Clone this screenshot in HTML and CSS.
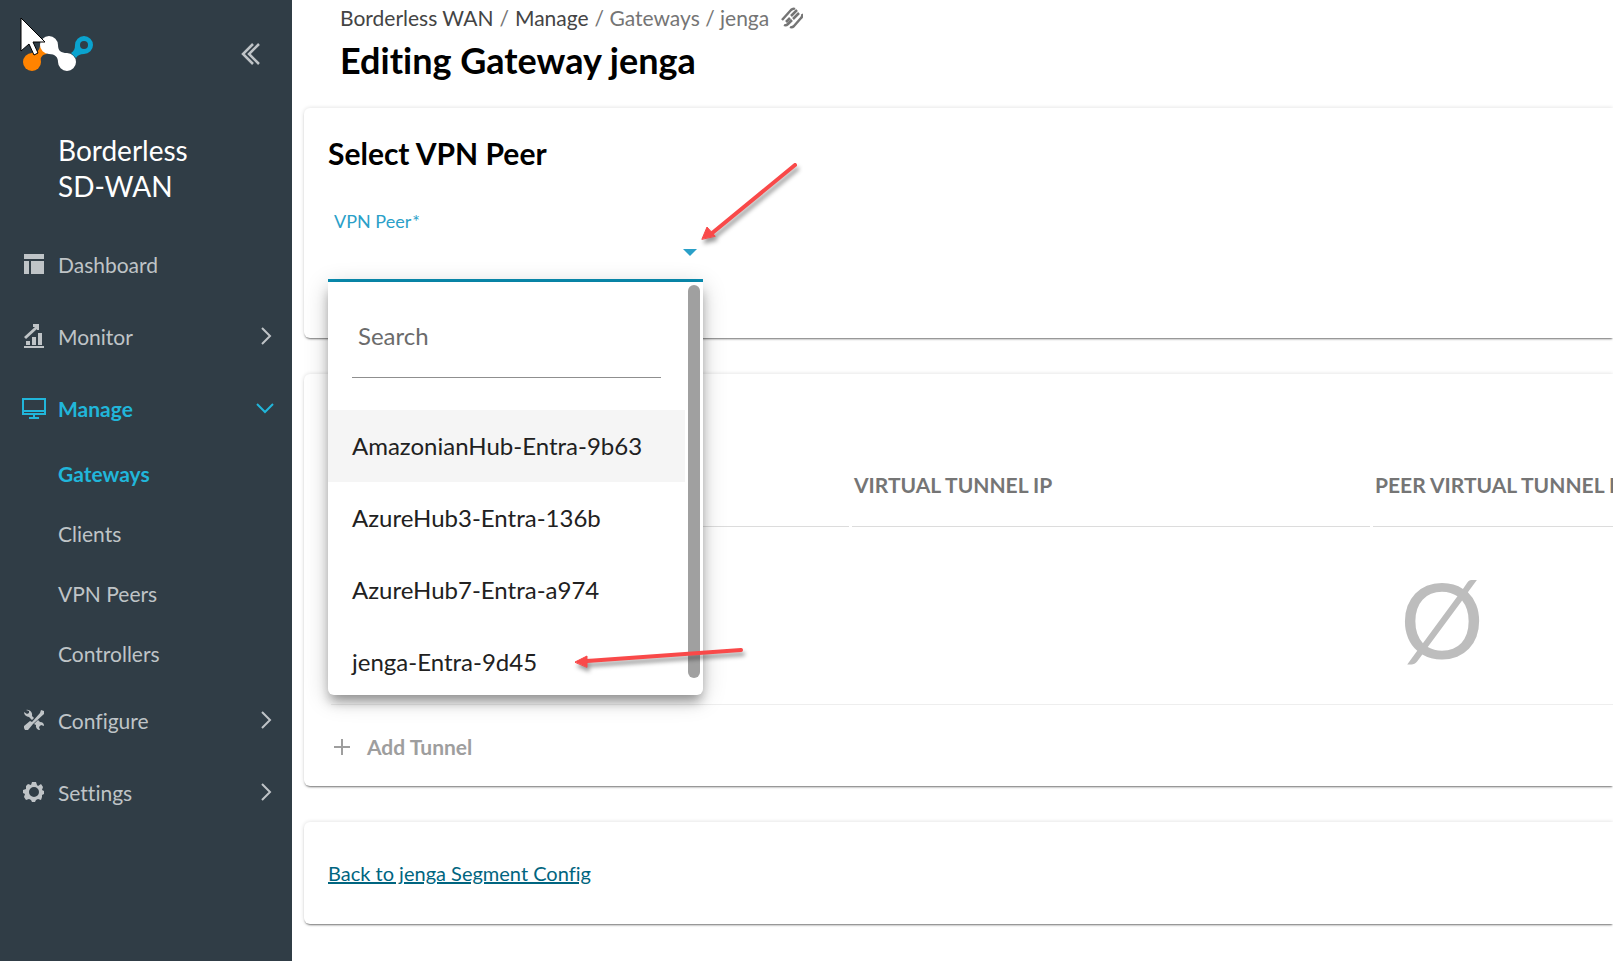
FILE: index.html
```html
<!DOCTYPE html>
<html lang="en">
<head>
  <meta charset="UTF-8" />
  <meta name="viewport" content="width=device-width, initial-scale=1" />
  <title>Editing Gateway jenga</title>
  <link rel="stylesheet" href="styles.css">
</head>
<body>
  <aside class="sidebar">
    <div class="sidebar-top">
      <svg class="logo" width="74" height="38" viewBox="0 0 74 38">
        <path d="M9 18c6 0 9-3 9-8l7 9c-5 0-7 4-7 9z" fill="#ff8300"/>
        <circle cx="10" cy="27" r="9" fill="#ff8300"/>
        <path d="M27 1a9 9 0 0 1 9 9c0 6 3 8 9 8a9 9 0 1 1-9 9c0-5-3-8-9-8a9 9 0 0 1 0-18z" fill="#fff"/>
        <path d="M62 1a9 9 0 1 1 0 18c-4 0-6 1-8 4l-5-5c3-2 4-4 4-8a9 9 0 0 1 9-9z" fill="#0aa3cf"/>
        <circle cx="62" cy="10" r="4" fill="#303d46"/>
      </svg>
      <button class="collapse-btn" aria-label="Collapse menu">
        <svg width="20" height="22" viewBox="0 0 20 22" fill="none" stroke="currentColor" stroke-width="2.500"><path d="M13 1 3 11l10 10M19 1 9 11l10 10"/></svg>
      </button>
    </div>
    <div class="product">Borderless<br>SD-WAN</div>
    <nav>
      <a class="nav-item" href="#">
        <svg class="nav-icon" viewBox="0 0 24 24" fill="currentColor"><path d="M2 2h20v5H2zM2 9h5v13H2zM9 9h13v13H9z"/></svg>
        Dashboard
      </a>
      <a class="nav-item" href="#">
        <svg class="nav-icon" viewBox="0 0 24 24" fill="currentColor"><path d="M2 22h20v2H2zM4 17h4v4H4zM10 13h4v8h-4zM16 9h4v12h-4zM2 13 13 3h-2V0h6v6h-2V5L4 15z"/></svg>
        Monitor
        <svg class="chevron" viewBox="0 0 18 18"><path d="m6 1 8 8-8 8"/></svg>
      </a>
      <a class="nav-item active" href="#">
        <svg class="nav-icon" viewBox="0 0 24 24" fill="none" stroke="currentColor" stroke-width="2"><path d="M1 3h22v15H1zM1 15h22M12 18v4M7 22h10"/></svg>
        Manage
        <svg class="chevron" viewBox="0 0 18 18"><path d="m1 5 8 8 8-8"/></svg>
      </a>
      <div class="subnav">
        <a class="sub-item active" href="#">Gateways</a>
        <a class="sub-item" href="#">Clients</a>
        <a class="sub-item" href="#">VPN Peers</a>
        <a class="sub-item" href="#">Controllers</a>
      </div>
      <a class="nav-item" href="#">
        <svg class="nav-icon" viewBox="0 0 24 24" fill="currentColor">
          <path d="M4 2a5 5 0 0 1 6 6l2 2-2 2-3-3a5 5 0 0 1-5-5l3 2 2-1V3z"/>
          <path d="m14 14 2-2 2 2a4 4 0 0 1 4 4l-3-1-2 2 1 3a4 4 0 0 1-4-5l-2-1z"/>
          <path d="m19 2 3 1v3L11 16l-5 6H3l-1-2v-2l6-5 2 1 8-9z"/>
        </svg>
        Configure
        <svg class="chevron" viewBox="0 0 18 18"><path d="m6 1 8 8-8 8"/></svg>
      </a>
      <a class="nav-item" href="#">
        <svg class="nav-icon" viewBox="0 0 24 24" fill="currentColor"><path fill-rule="evenodd" d="M10 2h4l1 3 1 1 3-2 2 3-1 3 2 1v3l-2 1v2l-1 3-3-1-2 1-1 2h-3l-1-2-2-1-3 1-2-3 1-3-2-1v-3l3-1V8L4 6l2-2 3 1zM12 7a5 5 0 1 0 0 10 5 5 0 0 0 0-10z"/></svg>
        Settings
        <svg class="chevron" viewBox="0 0 18 18"><path d="m6 1 8 8-8 8"/></svg>
      </a>
    </nav>
  </aside>

  <main>
    <header class="page-header">
      <div class="breadcrumb">
        <a href="#">Borderless WAN</a> / <a href="#">Manage</a> / Gateways / jenga
        <svg width="22" height="22" viewBox="0 0 22 22" fill="none" stroke="currentColor" stroke-width="2.500"><path d="M1 13 10 3q2-2 4-1M5 15l4-4M10 9l6-6M3 18q2 1 4-1l4-4M12 12l6-6M9 20q2 1 4-1l7-8q2-2 1-4"/></svg>
      </div>
      <h1>Editing Gateway jenga</h1>
    </header>

    <section class="card peer-card">
      <h2>Select VPN Peer</h2>
      <div class="field">
        <label for="peer">VPN Peer<span class="required">*</span></label>
        <button class="peer-select" id="peer" aria-haspopup="listbox" aria-expanded="true"></button>
        <div class="dropdown">
          <input class="search" type="text" placeholder="Search" aria-label="Search">
          <ul class="options" role="listbox">
            <li class="option highlighted" role="option">AmazonianHub-Entra-9b63</li>
            <li class="option" role="option">AzureHub3-Entra-136b</li>
            <li class="option" role="option">AzureHub7-Entra-a974</li>
            <li class="option" role="option">jenga-Entra-9d45</li>
          </ul>
          <div class="scroll-thumb"></div>
          <svg class="arrow arrow-option" width="180" height="34" viewBox="0 0 180 34"><path d="M12 17 166 6" stroke-width="4"/><path class="head" d="M0 18 12 12v11z"/></svg>
        </div>
        <svg class="arrow arrow-select" width="110" height="92" viewBox="0 0 110 92"><path d="M10 74 94 5" stroke-width="4"/><path class="head" d="M1 79 6 67l8 9z"/></svg>
      </div>
    </section>

    <section class="card tunnel-card">
      <div class="table-wrap">
        <table>
          <thead>
            <tr><th></th><th>VIRTUAL TUNNEL IP</th><th>PEER VIRTUAL TUNNEL IP</th><th></th><th class="actions"></th></tr>
          </thead>
          <tbody>
            <tr><td class="empty" colspan="5">Ø</td></tr>
          </tbody>
        </table>
      </div>
      <button class="add-btn" disabled>
        <svg width="18" height="18" viewBox="0 0 18 18" fill="none" stroke="currentColor" stroke-width="2"><path d="M9 1v16M1 9h16"/></svg>
        Add Tunnel
      </button>
    </section>

    <section class="card back-card">
      <a href="#">Back to jenga Segment Config</a>
    </section>
  </main>

  <!-- mouse pointer -->
  <svg class="cursor" width="26" height="40" viewBox="0 0 26 40"><path d="M1 1v33l8-7 5 11 4-2-5-11h12z" fill="#fff" stroke="#000"/></svg>
</body>
</html>
```

FILE: styles.css
```css
:root {
  --sidebar-bg: #303d46;
  --sidebar-text: #bfc4c7;
  --accent: #21b6da;
  --teal: #0a8fb3;
  --link: #006580;
  --muted: #757575;
}
* {
  box-sizing: border-box;
}
body {
  margin: 0;
  display: flex;
  min-height: 100vh;
  overflow: hidden;
  font-family: Lato, sans-serif;
  font-size: 21px;
  line-height: 30px;
  font-variant-ligatures: none;
  color: #000;
  background: #fff;
}
button {
  font: inherit;
  border: none;
  padding: 0;
  background: none;
}

/* sidebar */
.sidebar {
  flex: 0 0 292px;
  background: var(--sidebar-bg);
  color: var(--sidebar-text);
}
.sidebar-top {
  display: flex;
  justify-content: space-between;
  align-items: center;
  padding: 35px 32px 0 22px;
}
.logo {
  display: block;
}
.collapse-btn {
  display: flex;
  color: inherit;
}
.product {
  padding: 59px 24px 0 58px;
  height: 156px;
  font-size: 28px;
  line-height: 36px;
  color: #fff;
}
.nav-item {
  display: flex;
  align-items: center;
  height: 72px;
  padding: 0 18px 0 22px;
  color: inherit;
  text-decoration: none;
}
.nav-icon,
.chevron {
  margin-bottom: 2px;
}
.nav-icon {
  width: 24px;
  height: 24px;
  margin-right: 12px;
}
.chevron {
  width: 18px;
  height: 18px;
  margin-left: auto;
  fill: none;
  stroke: currentColor;
  stroke-width: 2;
}
.subnav {
  margin: -1px 0 1px;
}
.sub-item {
  display: flex;
  align-items: center;
  height: 60px;
  padding-left: 58px;
  color: inherit;
  text-decoration: none;
}
.nav-item.active,
.sub-item.active {
  color: var(--accent);
  font-weight: 700;
}

/* page */
main {
  flex: 1;
  min-width: 0;
  padding-left: 12px;
}
.page-header {
  height: 108px;
  padding: 3px 36px 0;
}
.breadcrumb {
  display: flex;
  align-items: center;
  gap: 6px;
  color: var(--muted);
}
.breadcrumb a {
  color: #444;
  text-decoration: none;
}
.breadcrumb svg {
  margin-left: 6px;
}
h1 {
  margin: 5px 0 0;
  font-size: 36px;
  line-height: 44px;
  font-weight: 700;
}
.card {
  margin-bottom: 36px;
  padding: 24px;
  border-radius: 6px 0 0 6px;
  background: #fff;
  box-shadow: 0 2px 2px -1px rgba(0, 0, 0, 0.5), 0 0 4px rgba(0, 0, 0, 0.14);
}
h2 {
  margin: 0;
  font-size: 30px;
  line-height: 42px;
  font-weight: 700;
}

/* peer select */
.peer-card {
  height: 230px;
}
.field {
  position: relative;
  width: 375px;
  margin-top: 35px;
}
.field label {
  display: block;
  padding-left: 6px;
  font-size: 18px;
  line-height: 24px;
  color: #2aa0c8;
}
.required {
  margin-left: 1px;
}
.peer-select {
  display: flex;
  justify-content: flex-end;
  width: 100%;
  height: 49px;
  padding: 16px 6px 0;
  border-bottom: 3px solid var(--teal);
}
.peer-select::after {
  content: "";
  border: 7px solid transparent;
  border-top-color: #2aa0c8;
  border-bottom: none;
}
.dropdown {
  position: absolute;
  z-index: 1;
  top: 100%;
  left: 0;
  width: 100%;
  height: 413px;
  padding: 18px 18px 0 0;
  border-radius: 0 0 6px 6px;
  background: #fff;
  box-shadow: 0 8px 12px -2px rgba(0, 0, 0, 0.35), 0 4px 24px rgba(0, 0, 0, 0.2);
}
.search {
  display: block;
  width: 309px;
  height: 78px;
  margin: 0 24px 32px;
  padding: 0 6px 6px;
  border: none;
  border-bottom: 1px solid #8f8f8f;
  outline: none;
  font: 24px Lato, sans-serif;
}
.search::placeholder {
  color: #6b6b6b;
}
.options {
  margin: 0;
  padding: 0;
  list-style: none;
}
.option {
  padding: 0 24px;
  font-size: 24px;
  line-height: 72px;
  color: #212121;
}
.option.highlighted {
  background: #f5f5f5;
}
.scroll-thumb {
  position: absolute;
  top: 3px;
  right: 3px;
  bottom: 17px;
  width: 12px;
  border-radius: 6px;
  background: #a0a0a0;
}

/* callout arrows */
.arrow {
  position: absolute;
  z-index: 2;
  fill: none;
  stroke: #f94949;
  stroke-linecap: round;
  filter: drop-shadow(2px 4px 2px rgba(0, 0, 0, 0.4));
}
.arrow .head {
  fill: #f94949;
}
.arrow-select {
  left: 373px;
  top: -49px;
}
.arrow-option {
  left: 247px;
  top: 362px;
}

/* tunnels */
.tunnel-card {
  padding: 54px 0 0 24px;
}
.table-wrap {
  overflow: hidden;
}
table {
  width: 2228px;
  table-layout: fixed;
  border-spacing: 3px 0;
}
th {
  height: 99px;
  padding: 16px 2px 0;
  border-bottom: 1px solid #dcdcdc;
  text-align: left;
  font-weight: 700;
  color: var(--muted);
}
th.actions {
  width: 138px;
}
.empty {
  height: 178px;
  padding: 4px 0 0;
  border-bottom: 1px solid #eee;
  text-align: center;
  font-size: 105px;
  line-height: 120px;
  color: #bdbdbd;
}
.add-btn {
  display: flex;
  align-items: center;
  gap: 16px;
  height: 81px;
  padding: 2px 0 0 5px;
  font-weight: 700;
  color: #9e9e9e;
}

.back-card {
  padding: 36px 24px;
}
.back-card a {
  font-size: 20px;
  color: var(--link);
}

.cursor {
  position: absolute;
  left: 20px;
  top: 17px;
}
```
